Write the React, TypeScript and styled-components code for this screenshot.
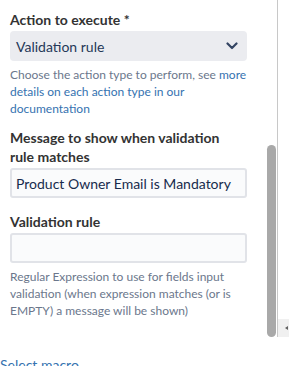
import React from "react";
import styled, { createGlobalStyle } from "styled-components";

const Global = createGlobalStyle`
  html, body { margin: 0; padding: 0; background: #ffffff; overflow: hidden; }
  body { font-family: Lato, "Liberation Sans", sans-serif; }
`;

const Page = styled.div`
  width: 289px;
  height: 366px;
  display: flex;
  flex-direction: column;
  overflow: hidden;
`;

const Top = styled.div`
  height: 339px;
  display: flex;
  flex-direction: row;
`;

const Panel = styled.div`
  width: 277px;
  display: flex;
  flex-direction: row;
  border-right: 1px solid #c8c8c8;
`;

const Form = styled.div`
  width: 237px;
  padding: 10px 20px 0 10px;
  display: flex;
  flex-direction: column;
`;

const Label = styled.div<{ $mt?: number }>`
  font-size: 14px;
  font-weight: 700;
  line-height: 19px;
  color: #333333;
  margin-top: ${(p) => p.$mt ?? 0}px;
  margin-bottom: 2px;
`;

const Select = styled.div`
  box-sizing: border-box;
  height: 30px;
  border-radius: 4px;
  background: #ebecf0;
  display: flex;
  align-items: center;
  justify-content: space-between;
  padding: 0 9px 0 6px;
  font-size: 14px;
  color: #253858;
`;

const Input = styled.div`
  box-sizing: border-box;
  height: 30px;
  border: 2px solid #e1e3e8;
  border-radius: 3px;
  background: #fafbfc;
  display: flex;
  align-items: center;
  padding: 0 4px;
  font-size: 14px;
  color: #172b4d;
  white-space: nowrap;
  overflow: hidden;
`;

const Help = styled.div`
  margin-top: 5px;
  font-size: 12px;
  line-height: 17px;
  color: #6b778c;
`;

const Link = styled.a`
  color: #3572b0;
  text-decoration: none;
`;

const Track = styled.div`
  width: 10px;
  padding-top: 145px;
  display: flex;
  flex-direction: column;
`;

const Thumb = styled.div`
  width: 9px;
  height: 192px;
  border-radius: 5px;
  background: #a9a9a9;
`;

const Side = styled.div`
  flex: 1;
  display: flex;
  flex-direction: column;
  justify-content: flex-end;
`;

const Corner = styled.div`
  height: 18px;
  background: #f0f0f0;
  display: flex;
  align-items: center;
  justify-content: flex-end;
  padding-right: 1px;
`;

const Arrow = styled.div`
  width: 0;
  height: 0;
  border-top: 2px solid transparent;
  border-bottom: 2px solid transparent;
  border-right: 3px solid #606060;
`;

const Divider = styled.div`
  height: 2px;
  background: #ebecf0;
`;

const Footer = styled.div`
  padding-top: 18px;
  font-size: 14px;
  color: #3572b0;
  line-height: 20px;
`;

const Chevron = () => (
  <svg width="12" height="8" viewBox="0 0 12 8">
    <path d="M1.5 1.5 L6 6 L10.5 1.5" fill="none" stroke="#344563" strokeWidth="2.2" strokeLinecap="round" strokeLinejoin="round" />
  </svg>
);

export default function App() {
  return (
    <Page>
      <Global />
      <Top>
        <Panel>
          <Form>
            <Label>Action to execute *</Label>
            <Select>
              <span>Validation rule</span>
              <Chevron />
            </Select>
            <Help>
              Choose the action type to perform, see <Link>more details on each action type in our documentation</Link>
            </Help>
            <Label $mt={11}>
              Message to show when validation
              <br />
              rule matches
            </Label>
            <Input>Product Owner Email is Mandatory</Input>
            <Label $mt={14}>Validation rule</Label>
            <Input />
            <Help>
              Regular Expression to use for fields input validation (when expression matches (or is EMPTY) a message will be shown)
            </Help>
          </Form>
          <Track>
            <Thumb />
          </Track>
        </Panel>
        <Side>
          <Corner>
            <Arrow />
          </Corner>
        </Side>
      </Top>
      <Divider />
      <Footer>Select macro</Footer>
    </Page>
  );
}
